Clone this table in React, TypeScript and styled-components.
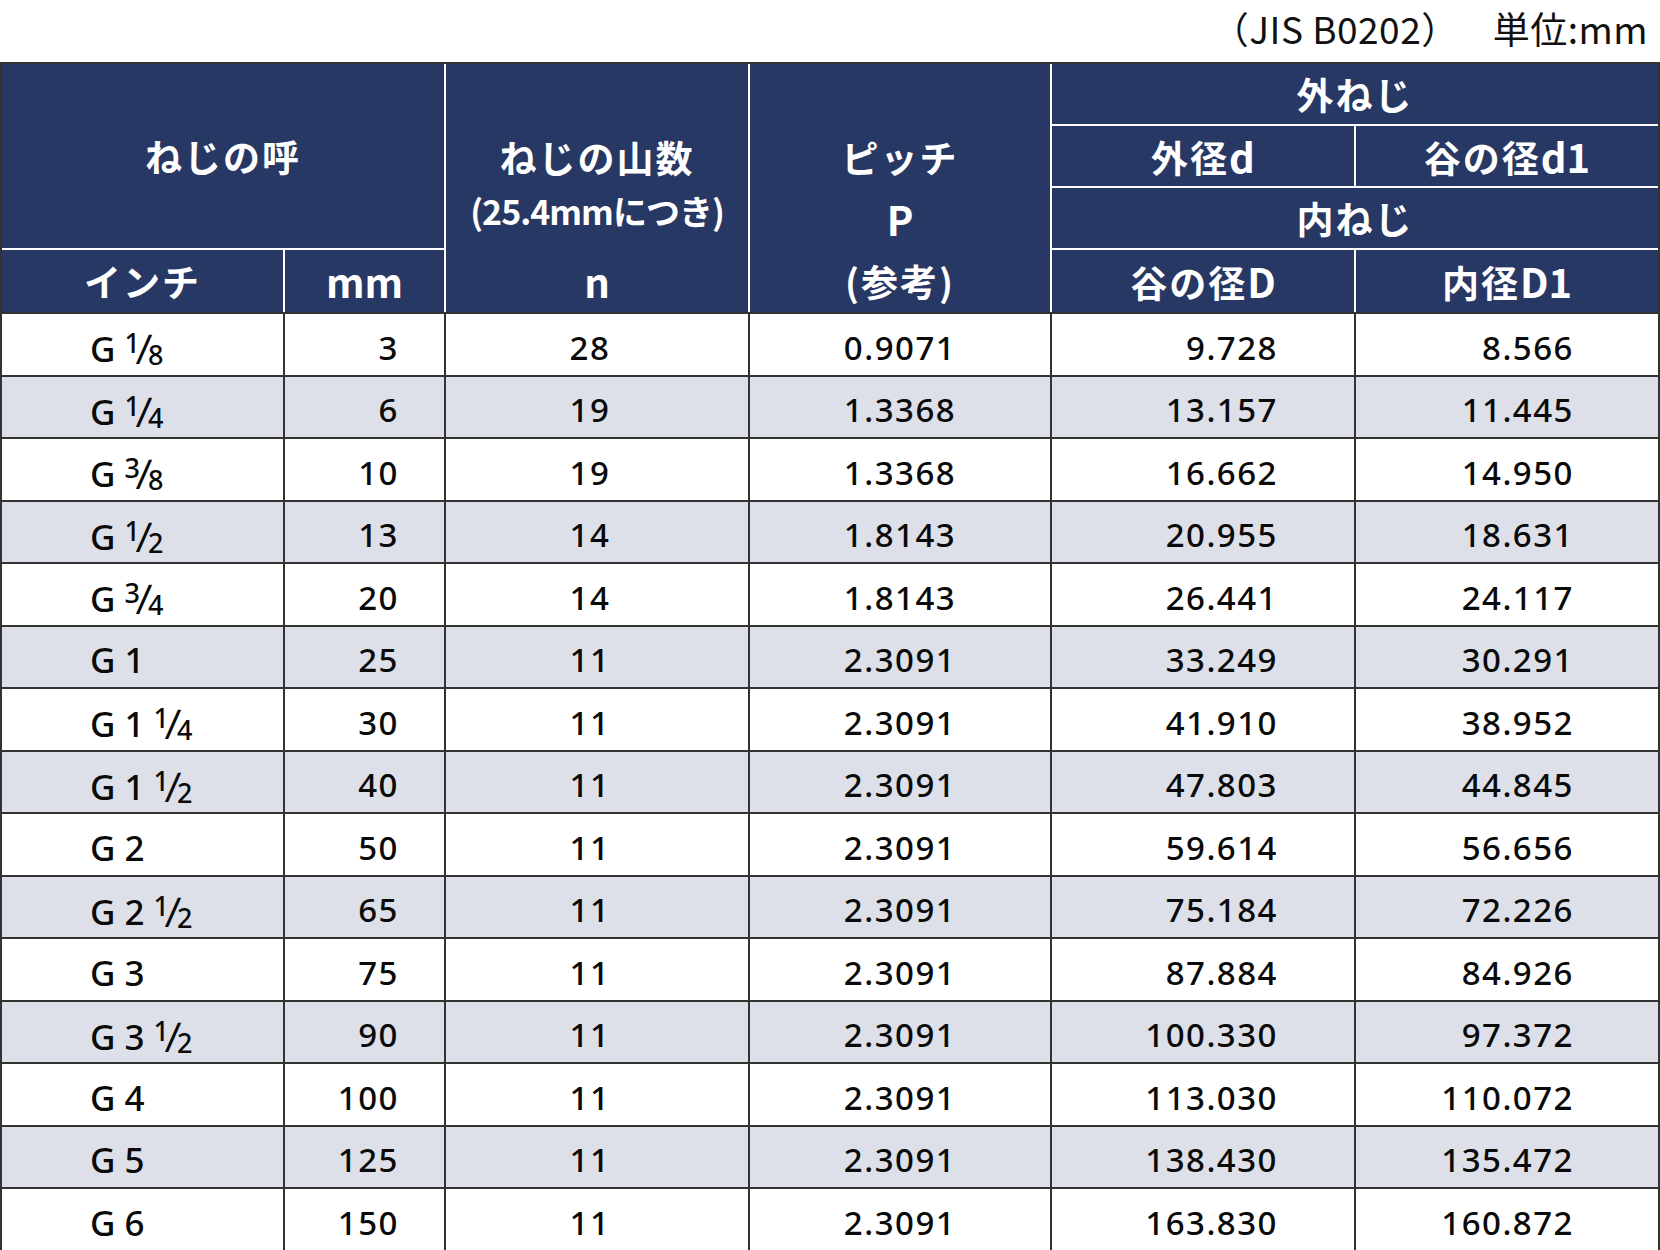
import React from "react";
import styled, { createGlobalStyle } from "styled-components";

type Row = {
  g: string;
  frac?: [string, string];
  mm: string;
  n: string;
  pitch: string;
  d: string;
  d1: string;
};

const rows: Row[] = [
  { g: "", frac: ["1", "8"], mm: "3", n: "28", pitch: "0.9071", d: "9.728", d1: "8.566" },
  { g: "", frac: ["1", "4"], mm: "6", n: "19", pitch: "1.3368", d: "13.157", d1: "11.445" },
  { g: "", frac: ["3", "8"], mm: "10", n: "19", pitch: "1.3368", d: "16.662", d1: "14.950" },
  { g: "", frac: ["1", "2"], mm: "13", n: "14", pitch: "1.8143", d: "20.955", d1: "18.631" },
  { g: "", frac: ["3", "4"], mm: "20", n: "14", pitch: "1.8143", d: "26.441", d1: "24.117" },
  { g: "1", mm: "25", n: "11", pitch: "2.3091", d: "33.249", d1: "30.291" },
  { g: "1", frac: ["1", "4"], mm: "30", n: "11", pitch: "2.3091", d: "41.910", d1: "38.952" },
  { g: "1", frac: ["1", "2"], mm: "40", n: "11", pitch: "2.3091", d: "47.803", d1: "44.845" },
  { g: "2", mm: "50", n: "11", pitch: "2.3091", d: "59.614", d1: "56.656" },
  { g: "2", frac: ["1", "2"], mm: "65", n: "11", pitch: "2.3091", d: "75.184", d1: "72.226" },
  { g: "3", mm: "75", n: "11", pitch: "2.3091", d: "87.884", d1: "84.926" },
  { g: "3", frac: ["1", "2"], mm: "90", n: "11", pitch: "2.3091", d: "100.330", d1: "97.372" },
  { g: "4", mm: "100", n: "11", pitch: "2.3091", d: "113.030", d1: "110.072" },
  { g: "5", mm: "125", n: "11", pitch: "2.3091", d: "138.430", d1: "135.472" },
  { g: "6", mm: "150", n: "11", pitch: "2.3091", d: "163.830", d1: "160.872" },
];

const GlobalStyle = createGlobalStyle`
  html, body {
    margin: 0;
    padding: 0;
    background: #ffffff;
  }
  body {
    font-family: "Noto Sans", "Noto Sans CJK JP", sans-serif;
  }
`;

const NAVY = "#283864";
const LINE = "#333333";

const Page = styled.div`
  width: 1660px;
`;

const Caption = styled.div`
  height: 62px;
  display: flex;
  justify-content: flex-end;
  align-items: center;
  gap: 34px;
  padding: 0 12px 6px 0;
  box-sizing: border-box;
  font-family: "Noto Sans CJK JP", sans-serif;
  font-size: 37px;
  letter-spacing: 0.5px;
  color: #111;
`;

const Table = styled.table`
  width: 1660px;
  table-layout: fixed;
  border-collapse: separate;
  border-spacing: 0;
  border: 2px solid ${LINE};
  box-sizing: border-box;
`;

const HeadRow = styled.tr`
  height: 62px;
`;

const Th = styled.th<{ $end?: boolean; $bottom?: boolean; $open?: boolean; $small?: boolean }>`
  background: ${NAVY};
  color: #ffffff;
  padding: ${({ $small }) => ($small ? "0 0 16px" : "0")};
  text-align: center;
  vertical-align: middle;
  font-family: "Noto Sans CJK JP", sans-serif;
  font-weight: 700;
  font-size: ${({ $small }) => ($small ? "34px" : "37px")};
  letter-spacing: ${({ $small }) => ($small ? "-1px" : "2px")};
  line-height: 1;
  white-space: nowrap;
  border-right: ${({ $end }) => ($end ? "none" : "2px solid #ffffff")};
  border-bottom: ${({ $bottom, $open }) => ($bottom || $open ? "none" : "2px solid #ffffff")};
`;

const Latin = styled.span`
  font-size: 40px;
  letter-spacing: 0;
`;

const BodyRow = styled.tr<{ $stripe: boolean }>`
  height: 62.5px;
  background: ${({ $stripe }) => ($stripe ? "#dde0e8" : "#ffffff")};
`;

const Td = styled.td<{ $align: "left" | "center" | "right"; $pl?: number; $pr?: number; $end?: boolean }>`
  padding: 6px ${({ $pr }) => $pr ?? 0}px 0 ${({ $pl }) => $pl ?? 0}px;
  text-align: ${({ $align }) => $align};
  vertical-align: middle;
  font-size: 33px;
  font-weight: 500;
  letter-spacing: 1.5px;
  color: #0a0a0a;
  line-height: 1;
  border-top: 2px solid ${LINE};
  border-right: ${({ $end }) => ($end ? "none" : `2px solid ${LINE}`)};
  white-space: nowrap;
`;

const Nominal = styled.span`
  display: inline-flex;
  align-items: baseline;
  gap: 9px;
  font-size: 35px;
  letter-spacing: 0;
`;

const FracBox = styled.span`
  display: inline-flex;
  align-items: baseline;
`;

const Num = styled.span`
  font-size: 27px;
  position: relative;
  top: -9px;
`;

const Den = styled.span`
  font-size: 27px;
  position: relative;
  top: 3px;
`;

const Slash = styled.span`
  display: inline-block;
  font-size: 38px;
  font-weight: 400;
  margin: 0 -3px 0 -3px;
  transform: translateY(1px) scaleY(1.08) skewX(-6deg);
`;

const Frac = ({ n, d }: { n: string; d: string }) => (
  <FracBox>
    <Num>{n}</Num>
    <Slash>/</Slash>
    <Den>{d}</Den>
  </FracBox>
);

export default function App() {
  return (
    <Page>
      <GlobalStyle />
      <Caption>
        <span>（JIS B0202）</span>
        <span>単位:mm</span>
      </Caption>
      <Table>
        <colgroup>
          <col style={{ width: 283 }} />
          <col style={{ width: 161 }} />
          <col style={{ width: 304 }} />
          <col style={{ width: 302 }} />
          <col style={{ width: 304 }} />
          <col style={{ width: 302 }} />
        </colgroup>
        <thead>
          <HeadRow>
            <Th colSpan={2} rowSpan={3}>ねじの呼</Th>
            <Th $open />
            <Th $open />
            <Th colSpan={2} $end>外ねじ</Th>
          </HeadRow>
          <HeadRow>
            <Th $open>ねじの山数</Th>
            <Th $open>ピッチ</Th>
            <Th>外径<Latin>d</Latin></Th>
            <Th $end>谷の径<Latin>d1</Latin></Th>
          </HeadRow>
          <HeadRow>
            <Th $open $small>(25.4mmにつき)</Th>
            <Th $open><Latin>P</Latin></Th>
            <Th colSpan={2} $end>内ねじ</Th>
          </HeadRow>
          <HeadRow>
            <Th $bottom>インチ</Th>
            <Th $bottom><Latin>mm</Latin></Th>
            <Th $bottom><Latin>n</Latin></Th>
            <Th $bottom>(参考)</Th>
            <Th $bottom>谷の径<Latin>D</Latin></Th>
            <Th $bottom $end>内径<Latin>D1</Latin></Th>
          </HeadRow>
        </thead>
        <tbody>
          {rows.map((r, i) => (
            <BodyRow key={i} $stripe={i % 2 === 1}>
              <Td $align="left" $pl={88}>
                <Nominal>
                  <span>G</span>
                  {r.g && <span>{r.g}</span>}
                  {r.frac && <Frac n={r.frac[0]} d={r.frac[1]} />}
                </Nominal>
              </Td>
              <Td $align="right" $pr={45}>{r.mm}</Td>
              <Td $align="center" $pr={14}>{r.n}</Td>
              <Td $align="center">{r.pitch}</Td>
              <Td $align="right" $pr={76}>{r.d}</Td>
              <Td $align="right" $pr={84} $end>{r.d1}</Td>
            </BodyRow>
          ))}
        </tbody>
      </Table>
    </Page>
  );
}
